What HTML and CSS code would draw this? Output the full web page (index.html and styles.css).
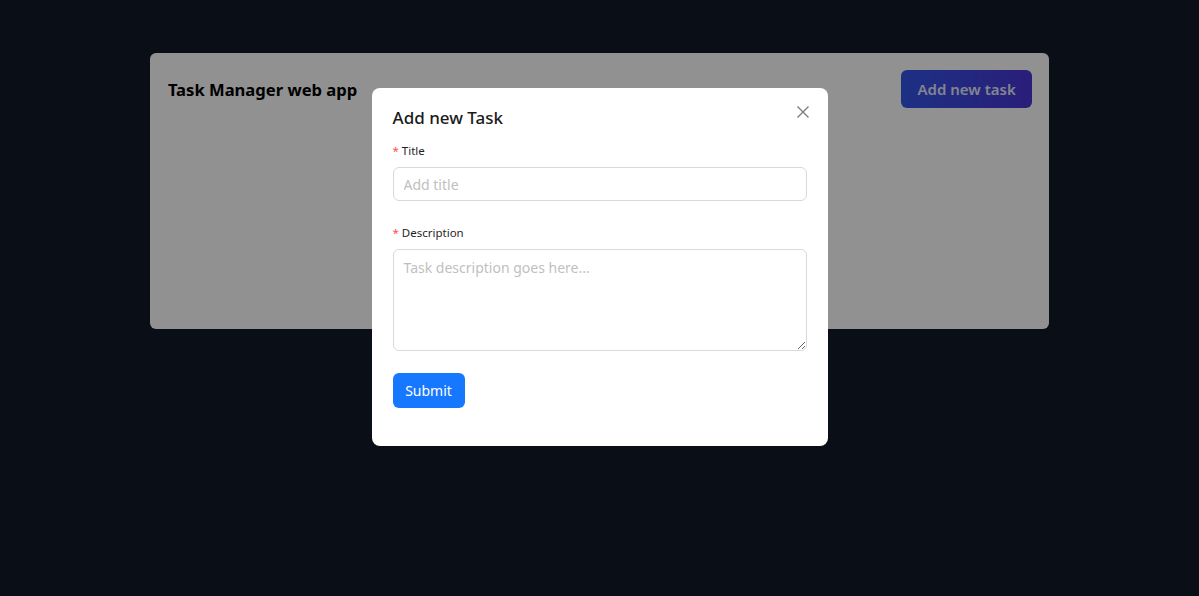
FILE: index.html
```html
<!DOCTYPE html>
<html lang="en">
<head>
    <meta charset="UTF-8">
    <meta name="viewport" content="width=device-width, initial-scale=1.0">
    <title>Task Manager web app</title>
    <link rel="stylesheet" href="styles.css">
</head>
<body>
    <div class="board">
        <div class="board-header">
            <h1>Task Manager web app</h1>
            <button class="add-btn">Add new task</button>
        </div>
    </div>

    <div class="mask">
        <div class="modal">
            <button class="close-btn" aria-label="Close">
                <svg width="14" height="14" viewBox="0 0 14 14">
                    <path d="M1.5 1.5 L12.5 12.5 M12.5 1.5 L1.5 12.5" stroke="#7a7a7a" stroke-width="1.3" fill="none"/>
                </svg>
            </button>
            <h2>Add new Task</h2>
            <form class="task-form">
                <div class="field">
                    <label for="title"><span class="req">*</span> Title</label>
                    <input type="text" id="title" placeholder="Add title">
                </div>
                <div class="field">
                    <label for="desc"><span class="req">*</span> Description</label>
                    <textarea id="desc" placeholder="Task description goes here..."></textarea>
                </div>
                <button type="submit" class="submit-btn">Submit</button>
            </form>
        </div>
    </div>
</body>
</html>
```

FILE: styles.css
```css
* {
    margin: 0;
    padding: 0;
    box-sizing: border-box;
}
body {
    font-family: 'Noto Sans', 'Open Sans', sans-serif;
    background: #131928;
    color: #1f1f1f;
    height: 100vh;
    overflow: hidden;
}
.board {
    width: 75%;
    height: 276px;
    margin: 53px auto 0;
    background: #fff;
    border-radius: 6px;
}
.board-header {
    display: flex;
    justify-content: space-between;
    align-items: center;
    padding: 17px 17px 0 18px;
}
.board-header h1 {
    font-size: 16.6px;
    font-weight: 700;
    color: #000;
}
.add-btn {
    width: 131px;
    height: 38px;
    border: none;
    border-radius: 6px;
    background: linear-gradient(90deg, #3356e8, #4a36d6);
    color: #e4e8ff;
    font-family: inherit;
    font-size: 15px;
    font-weight: 600;
}
.mask {
    position: fixed;
    inset: 0;
    background: rgba(0, 0, 0, 0.43);
}
.modal {
    position: relative;
    width: 456px;
    margin: 88px auto 0;
    background: #fff;
    border-radius: 8px;
    padding: 17px 21px 38px;
}
.modal h2 {
    font-size: 17px;
    font-weight: 500;
    line-height: 26px;
    margin-bottom: 10px;
    color: #1a1a1a;
}
.close-btn {
    position: absolute;
    top: 13px;
    right: 14px;
    width: 22px;
    height: 22px;
    border: none;
    background: none;
    display: flex;
    align-items: center;
    justify-content: center;
}
.task-form {
    display: flex;
    flex-direction: column;
}
.field {
    display: flex;
    flex-direction: column;
    margin-bottom: 22px;
}
.field label {
    font-size: 11.5px;
    line-height: 20px;
    padding-bottom: 6px;
    color: #1f1f1f;
}
.req {
    color: #ff4d4f;
}
.field input, .field textarea {
    font-family: inherit;
    font-size: 14px;
    border: 1px solid #d9d9d9;
    border-radius: 6px;
    padding: 0 10px;
    color: #1f1f1f;
}
.field input {
    height: 34px;
}
.field textarea {
    height: 102px;
    padding-top: 8px;
    resize: vertical;
}
input::placeholder, textarea::placeholder {
    color: #bfbfbf;
}
.submit-btn {
    align-self: flex-start;
    width: 72px;
    height: 35px;
    border: none;
    border-radius: 6px;
    background: #1677ff;
    color: #fff;
    font-family: inherit;
    font-size: 14px;
}
```
